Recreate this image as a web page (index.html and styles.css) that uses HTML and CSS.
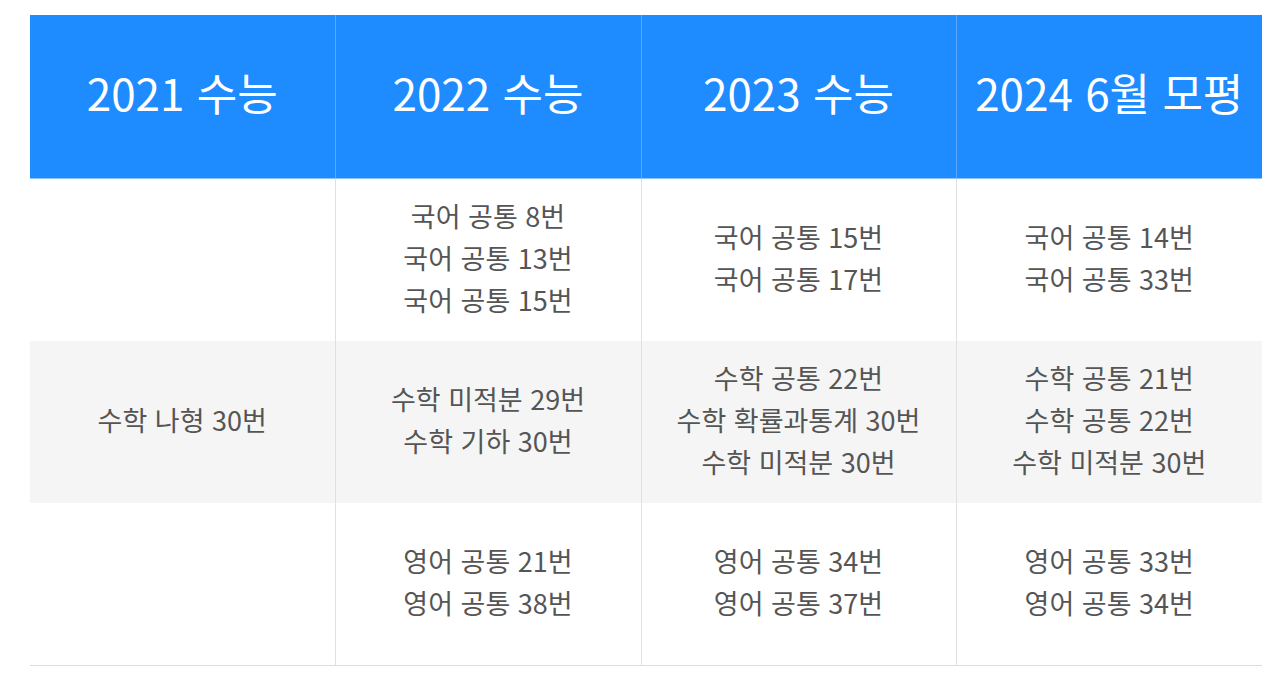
FILE: index.html
```html
<!DOCTYPE html>
<html lang="ko">
<head>
<meta charset="utf-8">
<link rel="stylesheet" href="styles.css">
</head>
<body>
<table class="exam">
  <colgroup>
    <col class="c1"><col class="c2"><col class="c3"><col class="c4">
  </colgroup>
  <thead>
    <tr>
      <th>2021 수능</th>
      <th>2022 수능</th>
      <th>2023 수능</th>
      <th>2024 6월 모평</th>
    </tr>
  </thead>
  <tbody>
    <tr class="first">
      <td></td>
      <td>국어 공통 8번<br>국어 공통 13번<br>국어 공통 15번</td>
      <td>국어 공통 15번<br>국어 공통 17번</td>
      <td>국어 공통 14번<br>국어 공통 33번</td>
    </tr>
    <tr class="alt">
      <td>수학 나형 30번</td>
      <td>수학 미적분 29번<br>수학 기하 30번</td>
      <td>수학 공통 22번<br>수학 확률과통계 30번<br>수학 미적분 30번</td>
      <td>수학 공통 21번<br>수학 공통 22번<br>수학 미적분 30번</td>
    </tr>
    <tr>
      <td></td>
      <td>영어 공통 21번<br>영어 공통 38번</td>
      <td>영어 공통 34번<br>영어 공통 37번</td>
      <td>영어 공통 33번<br>영어 공통 34번</td>
    </tr>
  </tbody>
</table>
</body>
</html>
```

FILE: styles.css
```css
html, body {
  margin: 0;
  padding: 0;
  background: #fff;
}
body {
  padding: 15px 0 0 30px;
  font-family: "Noto Sans CJK KR", "Noto Sans", sans-serif;
}
.exam {
  border-collapse: collapse;
  table-layout: fixed;
  width: 1232px;
}
.c1 { width: 305px; }
.c2 { width: 306px; }
.c3 { width: 315px; }
.c4 { width: 306px; }
.exam th {
  background: #1e8bff;
  color: #fff;
  font-weight: 400;
  font-size: 44px;
  line-height: 60px;
  height: 163px;
  padding: 0 0 8px;
  box-sizing: border-box;
  text-align: center;
  border-left: 1px solid #5aa8ff;
  border-bottom: 1px solid #8cc2ff;
}
.exam th:first-child { border-left: none; }
.exam td {
  height: 162px;
  padding: 0 0 4px;
  box-sizing: border-box;
  text-align: center;
  vertical-align: middle;
  color: #555;
  font-size: 27px;
  line-height: 42px;
  border-left: 1px solid #e0e0e0;
}
.exam tr.first td { height: 163px; }
.exam td:first-child { border-left: none; }
.exam tbody tr:last-child td { border-bottom: 1px solid #dcdcdc; }
.exam tr.alt td { background: #f5f5f5; }
```
